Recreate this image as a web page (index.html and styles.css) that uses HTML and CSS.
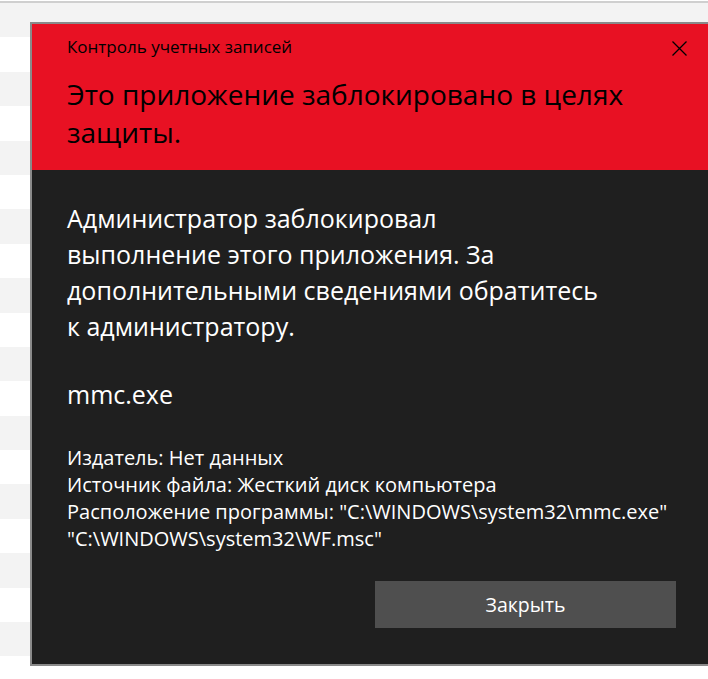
FILE: index.html
```html
<!DOCTYPE html>
<html lang="ru">
<head>
    <meta charset="UTF-8">
    <meta name="viewport" content="width=device-width, initial-scale=1.0">
    <title>Контроль учетных записей</title>
    <link rel="stylesheet" href="styles.css">
</head>
<body>
    <div class="list">
        <div class="row"></div><div class="row"></div><div class="row"></div><div class="row"></div>
        <div class="row"></div><div class="row"></div><div class="row"></div><div class="row"></div>
        <div class="row"></div><div class="row"></div><div class="row"></div><div class="row"></div>
        <div class="row"></div><div class="row"></div><div class="row"></div><div class="row"></div>
        <div class="row"></div><div class="row"></div><div class="row"></div><div class="row"></div>
    </div>

    <div class="dialog">
        <div class="dialog-header">
            <div class="caption-row">
                <div class="caption">Контроль учетных записей</div>
                <button type="button" class="close-btn" aria-label="Закрыть">
                    <svg width="15" height="15" viewBox="0 0 15 15">
                        <path d="M0.5 0.5 L14.5 14.5 M14.5 0.5 L0.5 14.5" stroke="#000" stroke-width="1.3" fill="none"/>
                    </svg>
                </button>
            </div>
            <h1 class="title">Это приложение заблокировано в целях<br>защиты.</h1>
        </div>

        <div class="dialog-body">
            <p class="message">Администратор заблокировал<br>выполнение этого приложения. За<br>дополнительными сведениями обратитесь<br>к администратору.</p>
            <div class="app-name">mmc.exe</div>
            <div class="details">
                <div>Издатель: Нет данных</div>
                <div>Источник файла: Жесткий диск компьютера</div>
                <div>Расположение программы: "C:\WINDOWS\system32\mmc.exe"</div>
                <div>"C:\WINDOWS\system32\WF.msc"</div>
            </div>
            <div class="actions">
                <button type="button" class="close-action">Закрыть</button>
            </div>
        </div>
    </div>
</body>
</html>
```

FILE: styles.css
```css
* {
    margin: 0;
    padding: 0;
    box-sizing: border-box;
}

body {
    font-family: 'Open Sans', 'Segoe UI', sans-serif;
    background: white;
    height: 679px;
    overflow: hidden;
    position: relative;
}

.list {
    margin-top: 1px;
    border-top: 2px solid #cfcfcf;
}

.row {
    height: 34.4px;
    background: white;
}

.row:nth-child(odd) {
    background: #f3f3f3;
}

.dialog {
    position: absolute;
    left: 30px;
    top: 22px;
    width: 683px;
    border: 2px solid #8a8a8a;
    background: #1f1f1f;
}

.dialog-header {
    background: #e81123;
    color: #000;
    padding: 11px 35px 19px 35px;
}

.caption-row {
    display: flex;
    justify-content: space-between;
    align-items: flex-start;
}

.caption {
    font-size: 17px;
    line-height: 24px;
}

.close-btn {
    background: none;
    border: none;
    margin-top: 6px;
    margin-right: -11px;
    width: 15px;
    height: 15px;
    cursor: pointer;
}

.close-btn svg {
    display: block;
}

.title {
    font-size: 28px;
    font-weight: normal;
    line-height: 38px;
    margin-top: 16px;
}

.dialog-body {
    color: #fff;
    padding: 30px 35px 36px 35px;
}

.message {
    font-size: 25px;
    line-height: 36px;
}

.app-name {
    font-size: 25px;
    line-height: 36px;
    margin-top: 32px;
}

.details {
    font-size: 20px;
    line-height: 27px;
    margin-top: 32px;
}

.actions {
    display: flex;
    justify-content: flex-end;
    margin-top: 29px;
}

.close-action {
    width: 301px;
    height: 47px;
    background: #4f4f4f;
    color: #fff;
    border: none;
    font-family: inherit;
    font-size: 19.5px;
    cursor: pointer;
}

.close-action:hover {
    background: #5c5c5c;
}
```
